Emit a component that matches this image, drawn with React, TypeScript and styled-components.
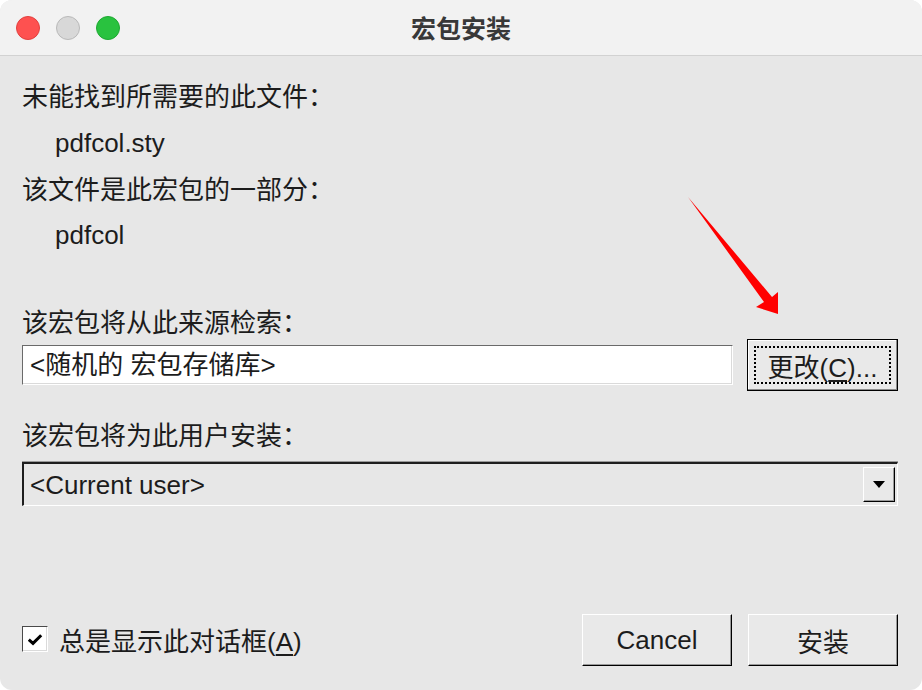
import styled, { createGlobalStyle } from "styled-components"

const GlobalStyle = createGlobalStyle`
    html, body {
        margin: 0;
        padding: 0;
        background: #ffffff;
    }
    body {
        font-family: "Liberation Sans", "Noto Sans CJK SC", sans-serif;
    }
`

const FONT = `"Liberation Sans", "Noto Sans CJK SC", sans-serif`

export default function App() {
    return <>
        <GlobalStyle />
        <Window>
            <TitleBar>
                <Lights>
                    <Light color="#fe5150" edge="#e2403e" />
                    <Light color="#d8d8d8" edge="#b9b9b9" />
                    <Light color="#29c23f" edge="#1ea932" />
                </Lights>
                <Title>宏包安装</Title>
            </TitleBar>

            <Body>
                <Label>未能找到所需要的此文件：</Label>
                <Value top={16}>pdfcol.sty</Value>
                <Label top={17}>该文件是此宏包的一部分：</Label>
                <Value top={15}>pdfcol</Value>

                <Label top={58}>该宏包将从此来源检索：</Label>
                <SourceRow>
                    <TextField>&lt;随机的 宏包存储库&gt;</TextField>
                    <PushButton focused>
                        <FocusRing><span>更改(<u>C</u>)...</span></FocusRing>
                    </PushButton>
                </SourceRow>

                <Label top={30}>该宏包将为此用户安装：</Label>
                <Combo>
                    <ComboText>&lt;Current user&gt;</ComboText>
                    <ComboArrow>
                        <svg width="12" height="7" viewBox="0 0 12 7">
                            <polygon points="0,0 12,0 6,7" fill="#000" />
                        </svg>
                    </ComboArrow>
                </Combo>

                <Footer>
                    <CheckLabel>
                        <CheckBox>
                            <svg width="16" height="13" viewBox="0 0 16 13">
                                <path d="M1.8 6.6 L6 10.4 L14.2 2.2" stroke="#000" strokeWidth="3" fill="none" />
                            </svg>
                        </CheckBox>
                        <span>总是显示此对话框(<u>A</u>)</span>
                    </CheckLabel>
                    <Buttons>
                        <PushButton>Cancel</PushButton>
                        <PushButton>安装</PushButton>
                    </Buttons>
                </Footer>
            </Body>

            <Annotation width="922" height="690" viewBox="0 0 922 690">
                <polygon points="688,197 772,297 778,292 778,314 756,307 764,302" fill="#ff0000" />
            </Annotation>
        </Window>
    </>
}

const Window = styled.div`
    position: relative;
    width: 922px;
    height: 690px;
    border-radius: 12px;
    overflow: hidden;
    background: #e7e7e7;
    display: flex;
    flex-direction: column;
    font-family: ${FONT};
    color: #1c1c1c;
`

const TitleBar = styled.div`
    position: relative;
    height: 55px;
    flex-shrink: 0;
    background: #f2f2f2;
    border-bottom: 1px solid #d2d2d2;
    display: flex;
    align-items: center;
    justify-content: center;
`

const Lights = styled.div`
    position: absolute;
    left: 16px;
    top: 16px;
    display: flex;
    gap: 16px;
`

const Light = styled.div<{ color: string, edge: string }>`
    width: 22px;
    height: 22px;
    border-radius: 50%;
    background: ${p => p.color};
    border: 1px solid ${p => p.edge};
`

const Title = styled.div`
    font-size: 25px;
    font-weight: 700;
    color: #383838;
    margin-top: -2px;
`

const Body = styled.div`
    flex: 1;
    display: flex;
    flex-direction: column;
    padding: 26px 24px 24px 22px;
`

const Label = styled.div<{ top?: number }>`
    font-size: 26px;
    line-height: 30px;
    margin-top: ${p => p.top ?? 0}px;
`

const Value = styled(Label)`
    padding-left: 33px;
`

const SourceRow = styled.div`
    display: flex;
    align-items: center;
    gap: 14px;
    margin-top: 1px;
`

const TextField = styled.div`
    flex: 1;
    height: 40px;
    box-sizing: border-box;
    background: #ffffff;
    border: 1px solid;
    border-color: #6a6a6a #ffffff #ffffff #6a6a6a;
    box-shadow: inset -1px -1px 0 #dadada;
    padding-left: 7px;
    font-size: 26px;
    line-height: 38px;
    white-space: nowrap;
`

const PushButton = styled.div<{ focused?: boolean }>`
    width: ${p => p.focused ? 151 : 150}px;
    height: 52px;
    box-sizing: border-box;
    display: flex;
    align-items: center;
    justify-content: center;
    background: #e9e9e9;
    border: 1px solid;
    border-color: ${p => p.focused ? "#000 #000 #000 #000" : "#ffffff #000 #000 #ffffff"};
    box-shadow: ${p => p.focused ? "inset -1px -1px 0 #8a8a8a, inset 1px 1px 0 #ffffff" : "inset -1px -1px 0 #9a9a9a"};
    font-size: 26px;
    color: #1c1c1c;
    padding: ${p => p.focused ? "6px" : "0"};

    u {
        text-underline-offset: 3px;
    }
`

const FocusRing = styled.div`
    flex: 1;
    align-self: stretch;
    display: flex;
    align-items: center;
    justify-content: center;
    border: 2px dotted #000;
`

const Combo = styled.div`
    margin-top: 11px;
    height: 44px;
    box-sizing: border-box;
    display: flex;
    align-items: center;
    background: #e7e7e7;
    border-top: 2px solid #1e1e1e;
    border-left: 2px solid #1e1e1e;
    border-bottom: 1px solid #ffffff;
    border-right: 1px solid #ffffff;
    box-shadow: 0 -1px 0 #9a9a9a;
`

const ComboText = styled.div`
    flex: 1;
    padding-left: 6px;
    font-size: 26px;
    line-height: 30px;
`

const ComboArrow = styled.div`
    width: 32px;
    height: 35px;
    box-sizing: border-box;
    margin-right: 2px;
    margin-bottom: 1px;
    display: flex;
    align-items: center;
    justify-content: center;
    background: #e9e9e9;
    border: 1px solid;
    border-color: #ffffff #000 #000 #ffffff;
    box-shadow: inset -1px -1px 0 #9a9a9a;
`

const Footer = styled.div`
    margin-top: auto;
    display: flex;
    align-items: center;
    justify-content: space-between;
`

const CheckLabel = styled.div`
    display: flex;
    align-items: center;
    gap: 11px;
    font-size: 26px;
    margin-top: -2px;

    u {
        text-underline-offset: 3px;
    }
`

const CheckBox = styled.div`
    width: 26px;
    height: 26px;
    box-sizing: border-box;
    background: #ffffff;
    border: 1px solid;
    border-color: #4a4a4a #ffffff #ffffff #4a4a4a;
    box-shadow: inset -1px -1px 0 #dadada;
    display: flex;
    align-items: center;
    justify-content: center;
`

const Buttons = styled.div`
    display: flex;
    gap: 16px;
`

const Annotation = styled.svg`
    position: absolute;
    left: 0;
    top: 0;
    pointer-events: none;
`
